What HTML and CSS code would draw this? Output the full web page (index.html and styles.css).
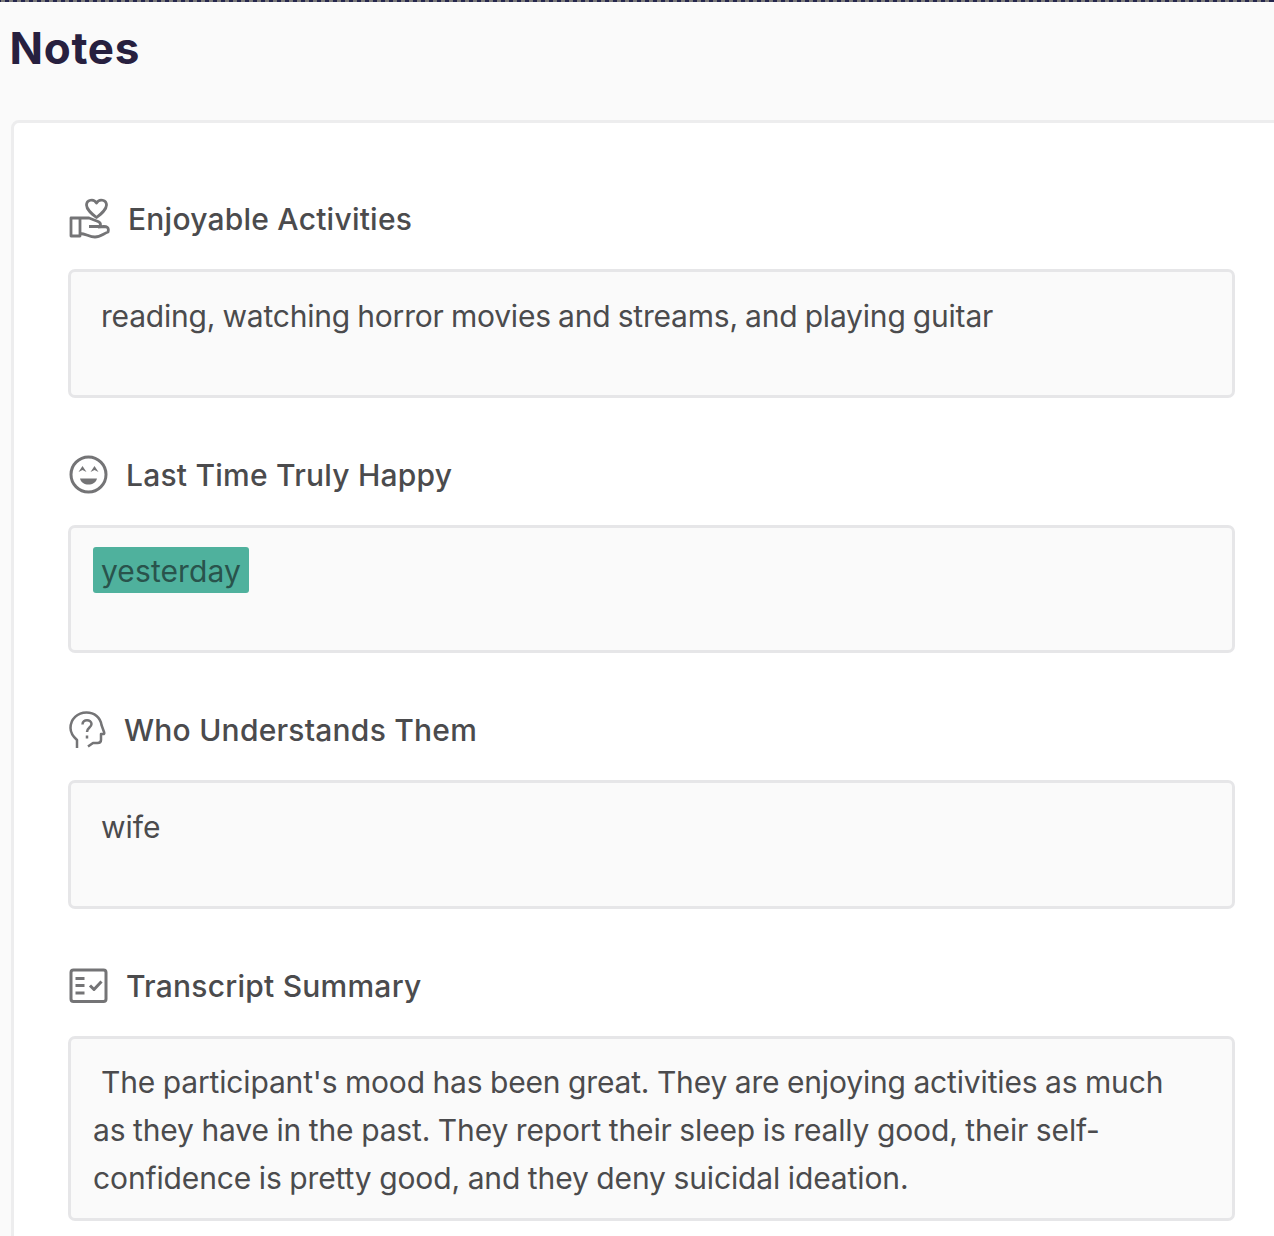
FILE: index.html
```html
<!DOCTYPE html>
<html lang="en">
<head>
<meta charset="utf-8">
<title>Notes</title>
<link rel="stylesheet" href="styles.css">
</head>
<body>
<div class="top-strip"></div>
<main class="page">
  <h1 class="title">Notes</h1>
  <div class="card">
    <section class="note">
      <h2 class="heading heading-activities">
        <svg class="icon icon-hand" viewBox="0 0 42 42" width="42" height="42">
          <path d="M3 20h9v18H3zM12 20h9l9 3.500c3.500 1.500 3 5 0 5h-9M12 35.500c6 0 9 3.500 15 3.500 5 0 8-3 13-5 1.500-5-2-5.500-4-5.500l-6 .5"/>
          <path d="M28.500 19.500c-5-4-10-8-10-12.500 0-5 7-7 10-2 3-5 10-3 10 2 0 4.500-5 8.500-10 12.500z"/>
        </svg>
        <span>Enjoyable Activities</span>
      </h2>
      <div class="field"><span class="line line-activities">reading, watching horror movies and streams, and playing guitar</span></div>
    </section>
    <section class="note">
      <h2 class="heading heading-happy">
        <svg class="icon" viewBox="0 0 40 40" width="40" height="40">
          <circle cx="20.500" cy="19.500" r="17.500"/>
          <path class="solid" d="M10.500 17l4-6 4 6-4-2zM22.500 17l4-6 4 6-4-2zM12 23.500h17c-1 4-4.500 6-8.500 6s-7.500-2-8.500-6z"/>
        </svg>
        <span>Last Time Truly Happy</span>
      </h2>
      <div class="field"><mark class="line mark">yesterday</mark></div>
    </section>
    <section class="note">
      <h2 class="heading heading-who">
        <svg class="icon icon-thin" viewBox="0 0 40 40" width="40" height="40">
          <path d="M9 38v-8C4.500 26 2.500 22.500 2.500 18 2.500 9 9.500 2.500 18.500 2.500c8 0 14 5 15 12.500l2.700 7.500c.3 1-.2 1.500-1 1.500H33v6c0 2-1.500 3-3.500 3H25l-5 3.500"/>
          <path d="M14.500 14.500c0-6 9-5.500 9-.5 0 3.500-4.500 3.500-4.500 8M19 25.500v3"/>
        </svg>
        <span>Who Understands Them</span>
      </h2>
      <div class="field"><span class="line">wife</span></div>
    </section>
    <section class="note">
      <h2 class="heading heading-summary">
        <svg class="icon" viewBox="0 0 40 40" width="40" height="40">
          <rect x="3" y="4" width="35" height="31.500" rx="2.500"/>
          <path d="M7.500 12.500H16.500M7.500 19.500H16.500M7.500 27H16.500M22 19.500l4 4 7.500-8"/>
        </svg>
        <span>Transcript Summary</span>
      </h2>
      <div class="field field-tall">
        <span class="line line-first">The participant's mood has been great. They are enjoying activities as much</span>
        <span class="line line-second">as they have in the past. They report their sleep is really good, their self-</span>
        <span class="line line-third">confidence is pretty good, and they deny suicidal ideation.</span>
      </div>
    </section>
  </div>
</main>
</body>
</html>
```
FILE: styles.css
```css
* { box-sizing: border-box; }
html, body { height: 1236px; overflow: hidden; }
body {
  margin: 0;
  background: #fafafa;
  color: #4b4b4d;
  font-family: Inter, "Liberation Sans", sans-serif;
}
.top-strip {
  height: 2px;
  background: repeating-linear-gradient(90deg, #24264d 0 4px, #7d7b79 4px 8px);
  background-position: -3px 0;
}
.title {
  margin: 0;
  padding: 16px 0 0 9.500px;
  height: 118px;
  font-size: 44px;
  line-height: 60px;
  font-weight: 700;
  letter-spacing: 0.700px;
  color: #27203f;
}
.card {
  margin-left: 11px;
  width: 1300px;
  height: 1150px;
  padding: 70px 0 0 54px;
  background: #fff;
  border: 3px solid #ededee;
  border-radius: 8px;
}
.note { width: 1167px; height: 255.600px; }
.heading {
  display: flex;
  align-items: center;
  margin: 0;
  height: 52px;
  gap: 18px;
  font-size: 30px;
  font-weight: 500;
  letter-spacing: 0.230px;
  white-space: nowrap;
}
.heading-who { gap: 16px; }
.icon {
  flex: none;
  fill: none;
  stroke: #747476;
  stroke-width: 3;
  stroke-linejoin: round;
}
.icon-hand { stroke-width: 2.800; }
.icon-thin { stroke-width: 2.500; }
.solid { fill: #747476; stroke: none; }
.field {
  margin-top: 24px;
  height: 128.500px;
  padding: 19.500px 22px;
  background: #fafafa;
  border: 3px solid #e6e6e8;
  border-radius: 7px;
  font-size: 30px;
  line-height: 48px;
}
.field-tall { height: 185px; }
.line { display: block; width: max-content; padding-left: 8px; white-space: nowrap; }
.line-second, .line-third { padding-left: 0; }
.line-activities { letter-spacing: -0.200px; word-spacing: -1px; }
.line-first { letter-spacing: -0.150px; word-spacing: -0.750px; }
.line-second { letter-spacing: -0.150px; word-spacing: -0.600px; }
.line-third { letter-spacing: -0.120px; word-spacing: -0.700px; }
.mark {
  height: 46px;
  padding: 0 8px;
  border-radius: 3px;
  background: #4fb19d;
  color: #29534c;
  letter-spacing: 0.100px;
}
```
